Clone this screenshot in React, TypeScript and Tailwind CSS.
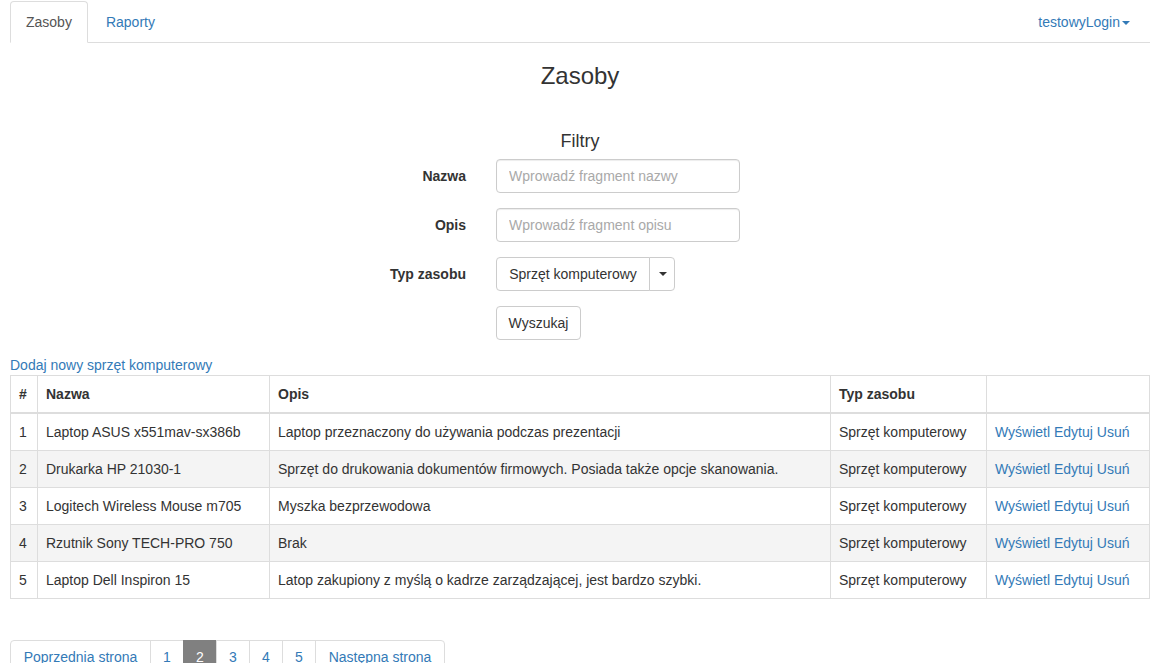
import React from "react";

const rows = [
  { id: 1, nazwa: "Laptop ASUS x551mav-sx386b", opis: "Laptop przeznaczony do używania podczas prezentacji" },
  { id: 2, nazwa: "Drukarka HP 21030-1", opis: "Sprzęt do drukowania dokumentów firmowych. Posiada także opcje skanowania." },
  { id: 3, nazwa: "Logitech Wireless Mouse m705", opis: "Myszka bezprzewodowa" },
  { id: 4, nazwa: "Rzutnik Sony TECH-PRO 750", opis: "Brak" },
  { id: 5, nazwa: "Laptop Dell Inspiron 15", opis: "Latop zakupiony z myślą o kadrze zarządzającej, jest bardzo szybki." },
];

const Caret = () => (
  <span className="ml-[2px] inline-block h-0 w-0 border-x-4 border-t-4 border-x-transparent border-t-current align-middle" />
);

const App = () => {
  return (
    <div className="h-[663px] w-[1156px] overflow-hidden bg-white text-[14px] leading-[20px] text-[#333] [font-family:'Liberation_Sans',Arial,sans-serif]">
      <div className="ml-[10px] w-[1140px]">
        {/* nav tabs */}
        <ul className="flex border-b border-[#ddd] pt-[1px]">
          <li className="-mb-px mr-[2px]">
            <a className="block rounded-t border border-[#ddd] border-b-white bg-white px-[15px] py-[10px] text-[#555]">Zasoby</a>
          </li>
          <li className="-mb-px">
            <a className="block border border-transparent px-[15px] py-[10px] text-[#337ab7]">Raporty</a>
          </li>
          <li className="-mb-px ml-auto">
            <a className="block border border-transparent px-[15px] py-[10px] pr-[19px] text-[#337ab7]">
              testowyLogin
              <Caret />
            </a>
          </li>
        </ul>

        <h3 className="mt-[20px] mb-[10px] text-center text-[24px] leading-[26.4px] font-normal">Zasoby</h3>

        <h4 className="mt-[42px] mb-[8px] text-center text-[18px] leading-[20px] font-normal">Filtry</h4>

        <form className="flex flex-col gap-[15px]">
          <div className="flex items-center">
            <label className="w-[456px] text-right font-bold">Nazwa</label>
            <input
              className="ml-[30px] h-[34px] w-[244px] rounded border border-[#ccc] px-[12px] text-[14px] shadow-[inset_0_1px_1px_rgba(0,0,0,0.075)] placeholder:text-[#a9a9a9]"
              placeholder="Wprowadź fragment nazwy"
            />
          </div>
          <div className="flex items-center">
            <label className="w-[456px] text-right font-bold">Opis</label>
            <input
              className="ml-[30px] h-[34px] w-[244px] rounded border border-[#ccc] px-[12px] text-[14px] shadow-[inset_0_1px_1px_rgba(0,0,0,0.075)] placeholder:text-[#a9a9a9]"
              placeholder="Wprowadź fragment opisu"
            />
          </div>
          <div className="flex items-center">
            <label className="w-[456px] text-right font-bold">Typ zasobu</label>
            <div className="ml-[30px] flex h-[34px]">
              <button type="button" className="w-[154px] rounded-l border border-[#ccc] bg-white px-[12px]">
                Sprzęt komputerowy
              </button>
              <button type="button" className="-ml-px flex w-[26px] items-center justify-center rounded-r border border-[#ccc] bg-white">
                <Caret />
              </button>
            </div>
          </div>
          <div className="flex items-center">
            <div className="w-[456px]" />
            <button type="button" className="ml-[30px] h-[34px] w-[85px] rounded border border-[#ccc] bg-white">
              Wyszukaj
            </button>
          </div>
        </form>

        <a className="mt-[15px] block text-[#337ab7]">Dodaj nowy sprzęt komputerowy</a>

        <table className="w-full border-collapse border border-[#ddd]">
          <thead>
            <tr className="text-left">
              <th className="w-[27px] border border-b-2 border-[#ddd] p-[8px] font-bold">#</th>
              <th className="w-[232px] border border-b-2 border-[#ddd] p-[8px] font-bold">Nazwa</th>
              <th className="w-[561px] border border-b-2 border-[#ddd] p-[8px] font-bold">Opis</th>
              <th className="w-[156px] border border-b-2 border-[#ddd] p-[8px] font-bold">Typ zasobu</th>
              <th className="border border-b-2 border-[#ddd] p-[8px]"></th>
            </tr>
          </thead>
          <tbody>
            {rows.map((r) => (
              <tr key={r.id} className="odd:bg-white even:bg-[#f4f4f4]">
                <td className="border border-[#ddd] p-[8px]">{r.id}</td>
                <td className="border border-[#ddd] p-[8px]">{r.nazwa}</td>
                <td className="border border-[#ddd] p-[8px]">{r.opis}</td>
                <td className="border border-[#ddd] p-[8px]">Sprzęt komputerowy</td>
                <td className="border border-[#ddd] p-[8px] text-[#337ab7]">
                  <a>Wyświetl</a> <a>Edytuj</a> <a>Usuń</a>
                </td>
              </tr>
            ))}
          </tbody>
        </table>

        <ul className="mt-[41px] flex">
          <li>
            <a className="block w-[141px] rounded-l border border-[#ddd] py-[6px] text-center text-[#337ab7]">Poprzednia strona</a>
          </li>
          {[1, 2, 3, 4, 5].map((n) =>
            n === 2 ? (
              <li key={n} className="-ml-px">
                <a className="block w-[34px] border border-[#808080] bg-[#808080] py-[6px] text-center text-white">{n}</a>
              </li>
            ) : (
              <li key={n} className="-ml-px">
                <a className="block w-[34px] border border-[#ddd] py-[6px] text-center text-[#337ab7]">{n}</a>
              </li>
            )
          )}
          <li className="-ml-px">
            <a className="block w-[130px] rounded-r border border-[#ddd] py-[6px] text-center text-[#337ab7]">Następna strona</a>
          </li>
        </ul>
      </div>
    </div>
  );
};

export default App;
